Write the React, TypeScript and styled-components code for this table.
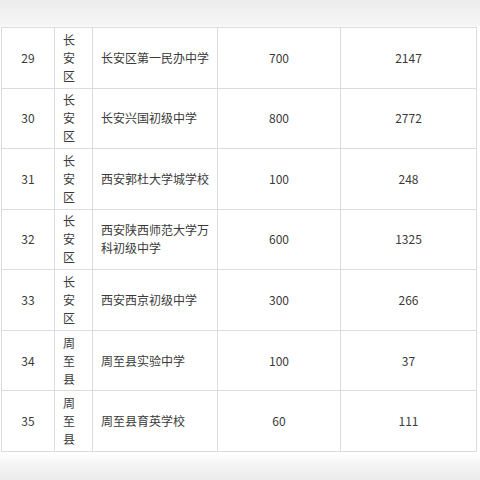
import styled, { createGlobalStyle } from "styled-components";

const GlobalStyle = createGlobalStyle`
  html, body {
    margin: 0;
    padding: 0;
  }
  body {
    font-family: "Noto Sans CJK SC", "Noto Sans", sans-serif;
    background: #fff;
  }
`;

type Row = {
  no: number;
  district: string;
  school: string;
  plan: number;
  applied: number;
};

const rows: Row[] = [
  { no: 29, district: "长安区", school: "长安区第一民办中学", plan: 700, applied: 2147 },
  { no: 30, district: "长安区", school: "长安兴国初级中学", plan: 800, applied: 2772 },
  { no: 31, district: "长安区", school: "西安郭杜大学城学校", plan: 100, applied: 248 },
  { no: 32, district: "长安区", school: "西安陕西师范大学万科初级中学", plan: 600, applied: 1325 },
  { no: 33, district: "长安区", school: "西安西京初级中学", plan: 300, applied: 266 },
  { no: 34, district: "周至县", school: "周至县实验中学", plan: 100, applied: 37 },
  { no: 35, district: "周至县", school: "周至县育英学校", plan: 60, applied: 111 },
];

const colWidths = [53, 38, 125, 123, 136];

function App() {
  return (
    <>
      <GlobalStyle />
      <Page>
        <Table>
          <colgroup>
            {colWidths.map((w, i) => (
              <Col key={i} $w={w} />
            ))}
          </colgroup>
          <tbody>
            {rows.map((r) => (
              <Tr key={r.no}>
                <Cell $align="center">{r.no}</Cell>
                <Cell $align="left">{r.district}</Cell>
                <Cell $align="left">{r.school}</Cell>
                <Cell $align="center">{r.plan}</Cell>
                <Cell $align="center">{r.applied}</Cell>
              </Tr>
            ))}
          </tbody>
        </Table>
      </Page>
    </>
  );
}

export default App;

const Page = styled.div`
  width: 480px;
  height: 480px;
  box-sizing: border-box;
  padding: 27px 0 0 1px;
  overflow: hidden;
  background: linear-gradient(
    #ececec 0px,
    #f6f6f6 26px,
    #ffffff 27px,
    #ffffff 454px,
    #f6f6f6 462px,
    #ebebeb 480px
  );
`;

const Table = styled.table`
  width: 476px;
  border-collapse: collapse;
  table-layout: fixed;
  background: #fff;
`;

const Col = styled.col<{ $w: number }>`
  width: ${(p) => p.$w}px;
`;

const Tr = styled.tr`
  height: 60.57px;
`;

type CellProps = {
  $align: "left" | "center";
};

const Cell = styled.td<CellProps>`
  border: 1px solid #dcdcdc;
  padding: 0 8px;
  font-size: 12px;
  line-height: 18px;
  color: #3a3a3a;
  text-align: ${(p) => p.$align};
  vertical-align: middle;
  word-break: break-all;
`;
